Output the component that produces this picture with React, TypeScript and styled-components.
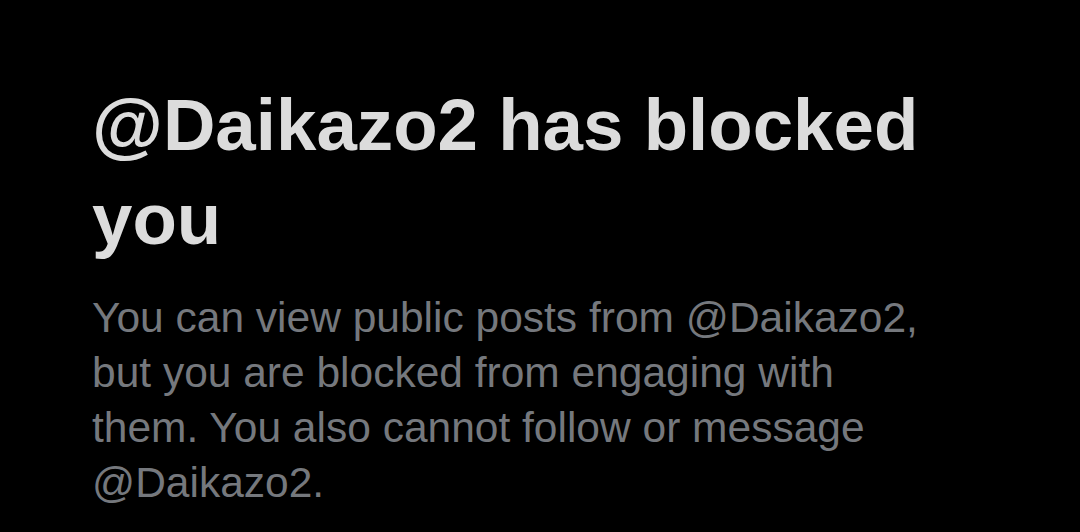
import React from "react";
import styled, { createGlobalStyle } from "styled-components";

const Global = createGlobalStyle`
  html, body { margin: 0; padding: 0; background: #000; }
  body { font-family: "Liberation Sans", Arial, sans-serif; }
`;

const Page = styled.main`
  width: 1080px;
  height: 532px;
  background: #000;
  box-sizing: border-box;
  padding: 78px 92px 0 92px;
  display: flex;
  flex-direction: column;
  overflow: hidden;
`;

const Title = styled.h1`
  margin: 0;
  font-size: 72.7px;
  line-height: 94px;
  font-weight: 700;
  color: #dcdcdc;
  width: 880px;
`;

const Body = styled.p`
  margin: 24px 0 0 0;
  font-size: 42.5px;
  line-height: 55px;
  font-weight: 400;
  color: #75787d;
  width: 845px;
`;

export default function App() {
  return (
    <>
      <Global />
      <Page>
        <Title>@Daikazo2 has blocked you</Title>
        <Body>
          You can view public posts from @Daikazo2, but you are blocked from
          engaging with them. You also cannot follow or message @Daikazo2.
        </Body>
      </Page>
    </>
  );
}
